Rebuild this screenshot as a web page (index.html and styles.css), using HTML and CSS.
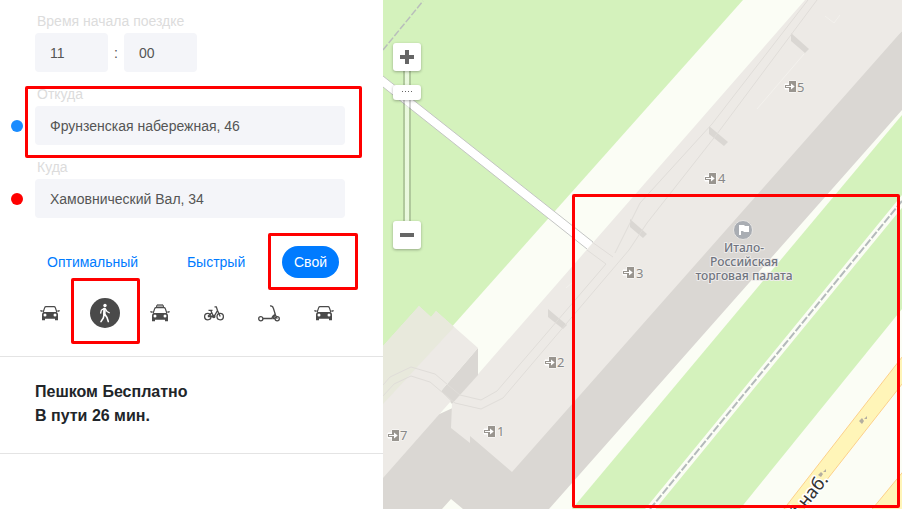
FILE: index.html
```html
<!DOCTYPE html>
<html lang="ru">
<head>
<meta charset="utf-8">
<meta name="viewport" content="width=device-width, initial-scale=1">
<title>Маршрут</title>
<link rel="stylesheet" href="styles.css">
</head>
<body>
<svg class="defs" aria-hidden="true">
  <defs>
    <symbol id="car" viewBox="0 0 20 15">
      <path d="M3.2 6 4.7 1.6Q5 .7 6 .7h8q1 0 1.300.9L16.800 6" fill="none" stroke="currentColor" stroke-width="1.200"/>
      <path d="M0 4.200h2.600v1.600H.8zM20 4.200h-2.600v1.600h1.800zM3.500 6h13q1.500.8 1.500 2.500V14.300h-3V12.800H5v1.500H2V8.500Q2 6.800 3.500 6z" fill="currentColor"/>
      <circle cx="5" cy="9" r="1.500" fill="#fff"/><circle cx="15" cy="9" r="1.500" fill="#fff"/>
    </symbol>
    <symbol id="entrance" viewBox="0 0 14 14" overflow="visible">
      <path d="M4 1h7v11H4V9H0V4h4z" fill="#fff" stroke="#fff"/>
      <path d="M4 1h7v11H4z" fill="#99958f"/>
      <path d="M0 5.500h4M0 7.500h4M.5 5v3" stroke="#99958f" fill="none"/>
      <path d="M1 6h5V3.500L9.700 6.500 6 9.500V7H1z" fill="#fff"/>
    </symbol>
  </defs>
</svg>
<main class="app">
  <aside class="sidebar">
    <form class="form">
      <fieldset class="field">
        <legend class="label">Время начала поездке</legend>
        <div class="time">
          <input class="input input-time" type="text" value="11" aria-label="Часы">
          <span>:</span>
          <input class="input input-time" type="text" value="00" aria-label="Минуты">
        </div>
      </fieldset>
      <div class="field point point-from">
        <label class="label" for="from">Откуда</label>
        <input class="input" id="from" type="text" value="Фрунзенская набережная, 46">
        <span class="mark mark-from"></span>
      </div>
      <div class="field point point-to">
        <label class="label" for="to">Куда</label>
        <input class="input" id="to" type="text" value="Хамовнический Вал, 34">
      </div>
      <div class="tabs">
        <button class="tab" type="button">Оптимальный</button>
        <button class="tab" type="button">Быстрый</button>
        <div class="marked"><button class="tab tab-active" type="button">Свой</button><span class="mark mark-tab"></span></div>
      </div>
      <div class="modes">
        <button class="mode" type="button" aria-label="Автомобиль"><svg width="20" height="15"><use href="#car"/></svg></button>
        <div class="marked">
          <button class="mode mode-active" type="button" aria-label="Пешком">
            <svg width="14" height="20" viewBox="0 0 14 20" fill="none" stroke="currentColor" stroke-linecap="round" stroke-linejoin="round">
              <circle cx="7" cy="2.500" r="1.700" fill="currentColor" stroke="none"/>
              <path d="M6.500 6 6.300 11.500" stroke-width="2.600"/>
              <path d="M6 5.500 3.300 7.300 2.700 10M7.500 6 9 8.500 11.300 9.800" stroke-width="1.300"/>
              <path d="M6 12 5.300 15 3 18.600M7 11.500 9 14.500 10.300 18.600" stroke-width="1.600"/>
            </svg>
          </button>
          <span class="mark mark-mode"></span>
        </div>
        <button class="mode" type="button" aria-label="Такси">
          <svg width="20" height="18" viewBox="0 0 20 18"><path d="M6.300 3.500 7 .9h6l.7 2.600" fill="#aaa" stroke="currentColor"/><use href="#car" y="3" width="20" height="15"/></svg>
        </button>
        <button class="mode" type="button" aria-label="Велосипед">
          <svg width="20" height="15" viewBox="0 0 20 15" fill="none" stroke="currentColor" stroke-width="1.300">
            <circle cx="3.800" cy="10.600" r="3.200"/><circle cx="16.200" cy="10.600" r="3.200"/>
            <path d="M10.500.8h1.800l1.200 3.600 2.700 6.200M13.500 4.500 10 10.500H3.800M4.500 4.300h4M6.800 4.500 9.500 10.500M4 10.300 7.500 7"/>
            <circle cx="9.800" cy="10.600" r="1.100" fill="currentColor"/>
          </svg>
        </button>
        <button class="mode" type="button" aria-label="Самокат">
          <svg width="22" height="17" viewBox="0 0 22 17" fill="none" stroke="currentColor" stroke-width="1.300">
            <circle cx="2.800" cy="13.700" r="2.100"/><circle cx="19.200" cy="13.700" r="2.100"/>
            <path d="M4.900 13.500h9Q14.500 10.500 17.500 9.700M12 .9Q14.800.7 15.300 3L17.500 10 19.200 13.700M17 9 15.500 13.500h1.600"/>
          </svg>
        </button>
        <button class="mode" type="button" aria-label="Каршеринг"><svg width="20" height="15"><use href="#car"/></svg></button>
      </div>
    </form>
    <section class="summary">
      <div>Пешком Бесплатно</div>
      <div>В пути 26 мин.</div>
    </section>
  </aside>
  <section class="map" aria-label="Карта">
    <svg class="canvas" viewBox="383 0 519 509" preserveAspectRatio="xMinYMin slice">
      <path d="M383 0h360L383 404z" fill="#d4f2bc"/>
      <path d="M383 50 423 1" stroke="#b9bebb" stroke-width="1.500" stroke-dasharray="7 2"/>
      <path d="M383 76 593 242 587 249 383 87z" fill="#fff"/>
      <path d="M383 76 593 242M383 87 587 249" stroke="#c3c5c3" fill="none"/>
      <path d="M902 115v194L740 509H572z" fill="#d4f2bc"/>
      <path d="M908 194 647 513" stroke="#fbfdf5" stroke-width="8"/>
      <path d="M902 201 650 509" stroke="#b4babb" stroke-width="2" stroke-dasharray="8 2"/>
      <path d="M906 352 780 514h20L906 379z" fill="#fff5b8" stroke="#fcd08a"/>
      <path d="M906 468 869 513h37z" fill="#fff5b8" stroke="#fcd08a"/>
      <path d="M902 31v79L549 509H463L451 499 442 509H383V440L470 400z" fill="#dad7d3"/>
      <path d="M805 0h97v31L512 472 470 436v7L451 428 452 404z" fill="#edeae6"/>
      <path d="M478 348v27L452 404 441 391z" fill="#dad7d3"/>
      <path d="M383 346 419 306 431 317 436 311 478 348 441 391 451 401 383 478z" fill="#edeae6"/>
      <path d="M383 346 419 306 431 317 436 311 454 327 383 404z" fill="#e8e9dc"/>
      <path d="M791 33v8l14 12 4-4zM709 126v8l15 12 4-4zM630 219v8l13 11 4-4zM548 309v8l15 12 4-4z" fill="#dad7d3"/>
      <g fill="none" stroke="#e0ddd9">
        <path d="M808 0 712 124 640 203 615 253M817 0 717 134 647 223 629 250 503 398 481 409 455 403 430 382 411 376 394 384 383 396M587 250 606 264 576 299 497 391 481 400 460 395 435 374 411 367 390 377 383 385M592 242 613 257"/>
      </g>
      <g fill="none" stroke="#f3f1ed"><path d="M804 54 757 109M825 16 834 23 840 15M566 288l7-6"/></g>
      <g class="entrances">
        <use href="#entrance" x="785" y="80" width="14" height="14"/><text x="797" y="92">5</text>
        <use href="#entrance" x="705" y="172" width="14" height="14"/><text x="718" y="183">4</text>
        <use href="#entrance" x="623" y="266" width="14" height="14"/><text x="636" y="278">3</text>
        <use href="#entrance" x="545" y="356" width="14" height="14"/><text x="557" y="367">2</text>
        <use href="#entrance" x="484" y="425" width="14" height="14"/><text x="497" y="436">1</text>
        <use href="#entrance" x="388" y="429" width="14" height="14"/><text x="400" y="440">7</text>
      </g>
      <circle cx="743" cy="230" r="9.500" fill="#a9adb3" stroke="#e7e5e3"/>
      <path d="M739 225h5l1 1h4v6h-5l-1-1h-2v4h-2z" fill="#fff"/>
      <g class="place"><text x="744" y="252">Итало-</text><text x="744" y="266">Российская</text><text x="744" y="280">торговая палата</text></g>
      <g fill="#b4aea0"><path d="M859 421l3-3 2 3-2 3zM864 419l3-3v3zM818 475l3-3 2 2-2 3zM823 472l3-3v3z"/></g>
      <text class="street" transform="translate(829 480) rotate(-51)">й наб.</text>
    </svg>
    <div class="zoom">
      <button class="zoom-button" type="button" aria-label="Приблизить"><svg width="14" height="14"><path d="M5 0h4v5h5v4H9v5H5V9H0V5h5z" fill="#666"/></svg></button>
      <input class="zoom-range" type="range" min="0" max="100" value="90" aria-label="Масштаб">
      <button class="zoom-button" type="button" aria-label="Отдалить"><svg width="14" height="14"><path d="M0 5h14v4H0z" fill="#666"/></svg></button>
    </div>
    <span class="mark mark-map"></span>
  </section>
</main>
</body>
</html>
```
FILE: styles.css
```css
* { box-sizing: border-box; }
body { margin: 0; font: 14px/18px "Liberation Sans", Arial, sans-serif; color: #555; background: #fff; }
button, input { font: inherit; }
.defs { position: absolute; width: 0; height: 0; }
.app { display: grid; grid-template-columns: 383px minmax(0, 1fr); min-height: 100vh; }

.form { padding: 12px 38px 28px 35px; border-bottom: 1px solid #e4e4e4; }
.field { margin: 0 0 13px; padding: 0; border: 0; min-width: 0; }
.label { display: block; padding: 0 2px; margin-bottom: 3px; color: #dcdcdc; }
.input { display: block; width: 100%; height: 39px; padding: 0 15px; border: 0; border-radius: 4px; background: #f4f5f9; color: #555; }
.time { display: flex; align-items: center; }
.time span { width: 16px; text-align: center; }
.input-time { width: 73px; }
.point { position: relative; }
.point::before { content: ""; position: absolute; left: -24px; bottom: 13px; width: 12px; height: 12px; border-radius: 50%; }
.point-from::before { background: #1a8cff; }
.point-to::before { background: #f00; }

.tabs { display: flex; justify-content: space-between; margin-top: 28px; padding-right: 6px; }
.tab { height: 32px; padding: 0 12px; border: 0; border-radius: 16px; background: none; color: #007bff; }
.tab-active { background: #007bff; color: #fff; }
.marked { position: relative; display: flex; }
.modes { display: flex; justify-content: space-between; margin-top: 20px; padding-right: 6px; }
.mode { display: flex; align-items: center; justify-content: center; width: 30px; height: 30px; padding: 0; border: 0; border-radius: 50%; background: none; color: #4a4a4a; }
.mode-active { background: #4a4a4a; color: #fff; }
.summary { padding: 23px 35px 25px; border-bottom: 1px solid #e4e4e4; font-size: 16px; font-weight: 700; line-height: 24px; color: #212529; }

.mark { position: absolute; z-index: 2; border: 3px solid #f00; border-radius: 2px; pointer-events: none; }
.mark-from { inset: 1px -17px -13px -10px; }
.mark-tab { inset: -13px -19px -12px -14px; }
.mark-mode { inset: -20px -20px -16px -19px; }
.mark-map { inset: 194px 2px 1px 189px; }

.map { position: relative; overflow: hidden; background: #fbfdf5; }
.canvas { position: absolute; width: 100%; height: 100%; }
.canvas text { font-family: "Noto Sans", sans-serif; paint-order: stroke; stroke-linejoin: round; }
.entrances text { font-size: 13px; fill: #888; stroke: #f3f1ed; stroke-width: 2px; }
.place text { font-size: 12px; font-weight: 500; text-anchor: middle; fill: #70757f; stroke: #eeeceb; stroke-width: 2px; }
.canvas .street { font-size: 18px; text-anchor: end; fill: #333; stroke: #fff; stroke-width: 3px; }

.zoom { position: absolute; left: 10px; top: 43px; display: flex; flex-direction: column; width: 28px; }
.zoom-button { position: relative; display: flex; align-items: center; justify-content: center; width: 28px; height: 28px; padding: 0; border: 0; border-radius: 3px; background: #fff; box-shadow: 0 1px 3px rgba(0, 0, 0, .3); }
.zoom-range { appearance: none; writing-mode: vertical-lr; direction: rtl; width: 28px; height: 150px; margin: 0; background: linear-gradient(90deg, transparent 10px, rgba(0, 0, 0, .17) 10px 12px, rgba(255, 255, 255, .5) 12px 16px, rgba(0, 0, 0, .17) 16px 18px, transparent 18px); }
.zoom-range::-webkit-slider-thumb { appearance: none; width: 28px; height: 15px; border: 0; border-radius: 3px; background: repeating-linear-gradient(90deg, transparent 0 9px, transparent 9px), conic-gradient(from 0deg at 1px 1px, transparent 75%, #666 75%) 9px 6px / 3px 2px no-repeat, #fff; box-shadow: 0 1px 3px rgba(0, 0, 0, .3); background: linear-gradient(#fff, #fff) 0 0 / 100% 5px no-repeat, linear-gradient(#fff, #fff) 0 100% / 100% 5px no-repeat, linear-gradient(#fff, #fff) 0 0 / 9px 100% no-repeat, linear-gradient(#fff, #fff) 100% 0 / 9px 100% no-repeat, conic-gradient(from 0deg at 1px 1px, #fff 75%, #666 75%) 9px 6px / 3px 4px, #fff; }
```
